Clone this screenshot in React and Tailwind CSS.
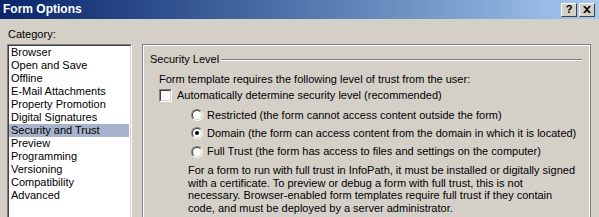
const categories = [
  'Browser',
  'Open and Save',
  'Offline',
  'E-Mail Attachments',
  'Property Promotion',
  'Digital Signatures',
  'Security and Trust',
  'Preview',
  'Programming',
  'Versioning',
  'Compatibility',
  'Advanced',
]

function CaptionButton({ children }) {
  return (
    <div className="w-[16px] h-[14px] bg-[#d4d0c8] border border-t-white border-l-white border-r-[#404040] border-b-[#404040] flex items-center justify-center text-black font-bold text-[11px] leading-none">
      {children}
    </div>
  )
}

function Sunken({ className, children }) {
  return (
    <div className={`border border-t-[#808080] border-l-[#808080] border-r-white border-b-white ${className}`}>
      <div className="w-full h-full border border-t-[#404040] border-l-[#404040] border-r-[#d4d0c8] border-b-[#d4d0c8] bg-white">
        {children}
      </div>
    </div>
  )
}

function Radio({ checked, label }) {
  return (
    <div className="flex items-center gap-[4px]">
      <div className="w-[12px] h-[12px] rounded-full border border-t-[#808080] border-l-[#808080] border-r-white border-b-white">
        <div className="w-full h-full rounded-full border border-t-[#404040] border-l-[#404040] border-r-[#d4d0c8] border-b-[#d4d0c8] bg-white flex items-center justify-center">
          {checked && <div className="w-[4px] h-[4px] rounded-full bg-black" />}
        </div>
      </div>
      <span>{label}</span>
    </div>
  )
}

export default function App() {
  return (
    <div className="w-[599px] h-[217px] overflow-hidden bg-[#d4d0c8] text-black text-[11px] leading-[13px] font-['Liberation_Sans',Arial,sans-serif] select-none">
      {/* title bar */}
      <div className="h-[19px] flex items-center justify-between pl-[3px] pr-[4px] bg-gradient-to-r from-[#0a246a] to-[#a6caf0]">
        <span className="text-white font-bold text-[12px]">Form Options</span>
        <div className="flex gap-[2px]">
          <CaptionButton>?</CaptionButton>
          <CaptionButton>
            <svg width="8" height="7" viewBox="0 0 8 7">
              <path d="M0 0h2l2 2 2-2h2L5 3.5 8 7H6L4 5 2 7H0l3-3.5z" fill="#000" />
            </svg>
          </CaptionButton>
        </div>
      </div>

      <div className="flex pl-[7px] pt-[9px]">
        {/* category list */}
        <div className="w-[125px] shrink-0">
          <div className="h-[13px] pl-[1px]">Category:</div>
          <Sunken className="mt-[3px] h-[200px]">
            <div className="flex flex-col pr-[1px]">
              {categories.map(c => (
                <div
                  key={c}
                  className={`h-[13px] pl-[2px] whitespace-nowrap ${c === 'Security and Trust' ? 'bg-[#a6b3cb]' : ''}`}
                >
                  {c}
                </div>
              ))}
            </div>
          </Sunken>
        </div>

        {/* settings panel */}
        <div className="ml-[10px] mt-[16px] w-[449px] h-[200px] border-t border-l border-r border-[#808080]">
          <div className="h-full border-t border-l border-r border-white pl-[6px] pt-[7px]">
            <div className="flex items-center pr-[7px]">
              <span>Security Level</span>
              <div className="flex-1 ml-[2px] mt-[1px] border-t border-[#808080] border-b border-b-white" />
            </div>

            <div className="pl-[9px]">
              <div className="mt-[7px] whitespace-nowrap">
                Form template requires the following level of trust from the user:
              </div>

              <div className="mt-[3px] flex items-center gap-[5px] h-[13px]">
                <Sunken className="w-[13px] h-[13px]" />
                <span>Automatically determine security level (recommended)</span>
              </div>

              <div className="mt-[4px] pl-[32px]">
                <div className="h-[18px] flex items-center">
                  <Radio label="Restricted (the form cannot access content outside the form)" />
                </div>
                <div className="h-[18px] flex items-center">
                  <Radio checked label="Domain (the form can access content from the domain in which it is located)" />
                </div>
                <div className="h-[19px] flex items-center">
                  <Radio label="Full Trust (the form has access to files and settings on the computer)" />
                </div>
              </div>

              <p className="mt-[3px] pl-[29px] leading-[12.5px] whitespace-nowrap">
                For a form to run with full trust in InfoPath, it must be installed or digitally signed<br />
                with a certificate. To preview or debug a form with full trust, this is not<br />
                necessary. Browser-enabled form templates require full trust if they contain<br />
                code, and must be deployed by a server administrator.
              </p>
            </div>
          </div>
        </div>
      </div>
    </div>
  )
}
